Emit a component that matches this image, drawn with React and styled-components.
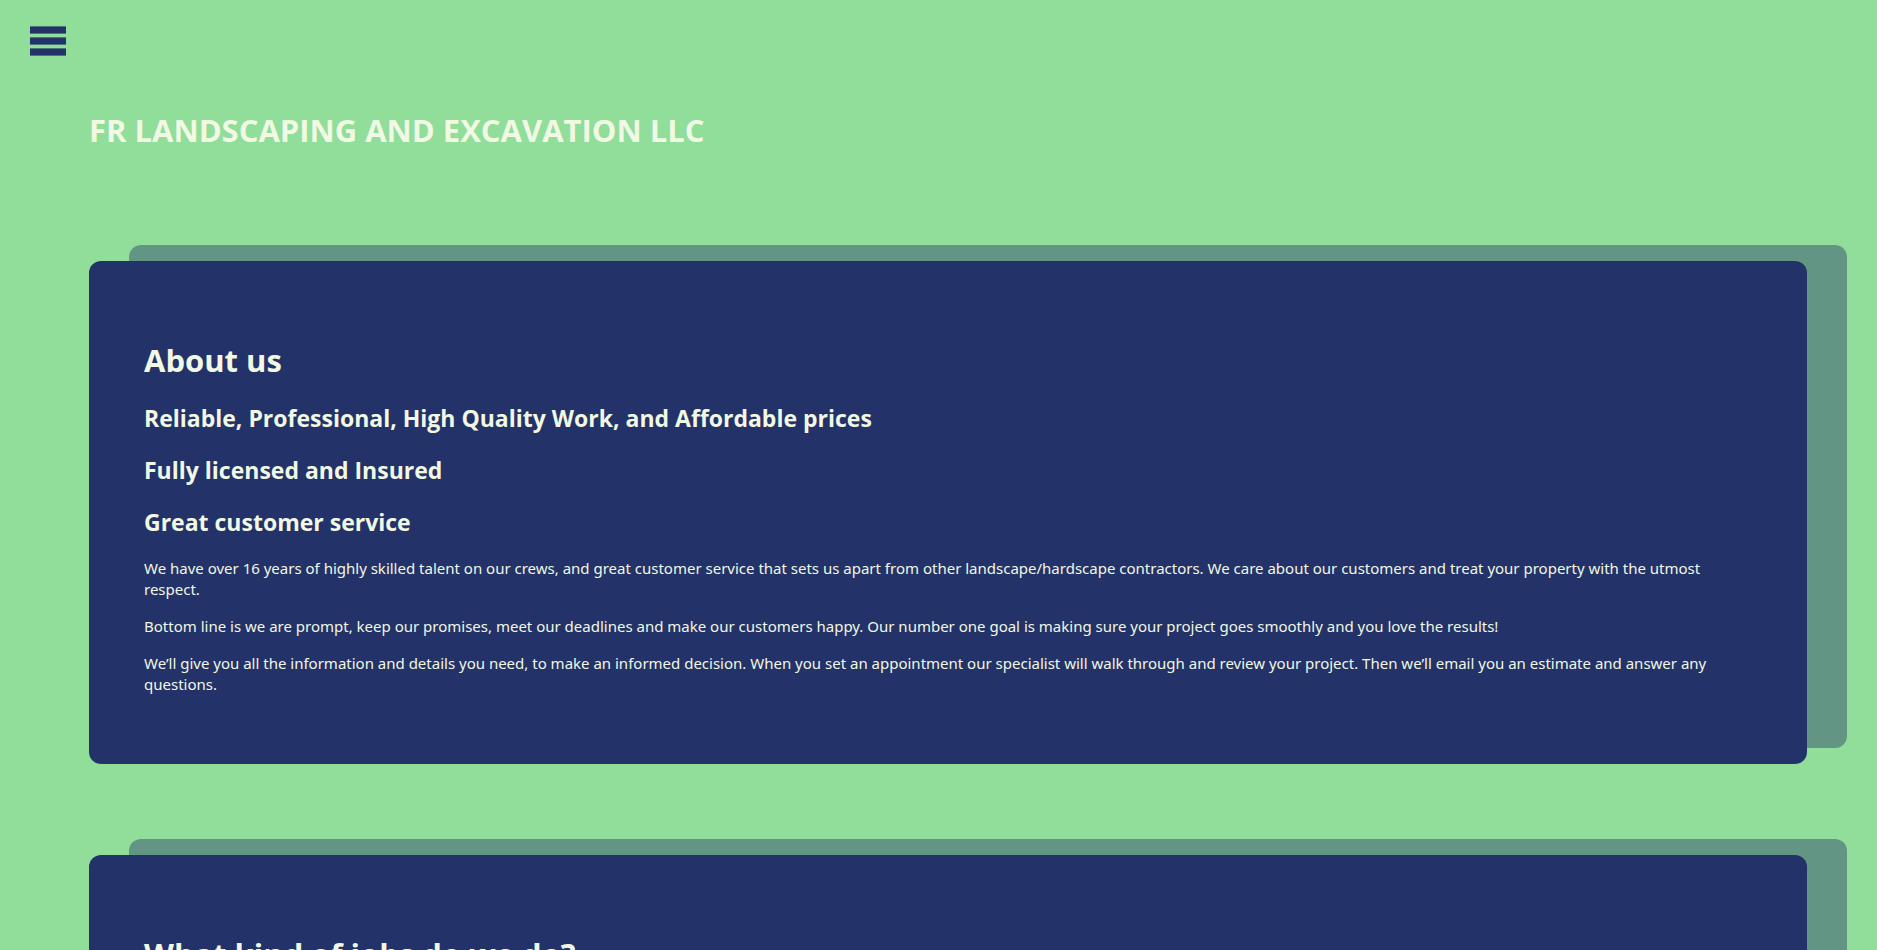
import React from 'react';
import styled, { createGlobalStyle } from 'styled-components';

const GlobalStyle = createGlobalStyle`
  *, *::before, *::after { box-sizing: border-box; }
  html { scrollbar-width: none; }
  body {
    margin: 0;
    background: #90de99;
    color: #f1f8e4;
    font-family: 'Segoe UI', 'Open Sans', 'Noto Sans', sans-serif;
    font-size: 15px;
    line-height: 21px;
  }
`;

const Header = styled.header`
  padding: 22px 30px 0;
`;

const MenuButton = styled.button`
  display: block;
  width: 36px;
  height: 38px;
  padding: 0;
  border: 0;
  background: transparent;
  color: #233268;
  cursor: pointer;

  svg { display: block; }
`;

const Main = styled.main`
  display: flex;
  flex-direction: column;
  gap: 91px;
  padding: 48px 70px 91px 89px;
`;

const Heading = styled.h1`
  margin: 0 0 20px;
  font-size: 31px;
  line-height: 44px;
  font-weight: 700;
`;

const SiteTitle = styled(Heading)`
  margin: 0 0 18px;
`;

const Card = styled.section`
  padding: 77px 56px 69px 55px;
  border-radius: 12px;
  background: #233268;
  box-shadow: 40px -16px 0 #629583;
`;

const Highlight = styled.h2`
  margin: 0 0 20px;
  font-size: 23px;
  line-height: 32px;
  font-weight: 700;
`;

const Text = styled.p`
  margin: 0 0 16px;
  font-family: 'Segoe UI', 'Noto Sans', 'Open Sans', sans-serif;

  &:last-child { margin-bottom: 0; }
`;

const highlights = [
  'Reliable, Professional, High Quality Work, and Affordable prices',
  'Fully licensed and Insured',
  'Great customer service',
];

const paragraphs = [
  'We have over 16 years of highly skilled talent on our crews, and great customer service that sets us apart from other landscape/hardscape contractors. We care about our customers and treat your property with the utmost respect.',
  'Bottom line is we are prompt, keep our promises, meet our deadlines and make our customers happy. Our number one goal is making sure your project goes smoothly and you love the results!',
  'We’ll give you all the information and details you need, to make an informed decision. When you set an appointment our specialist will walk through and review your project. Then we’ll email you an estimate and answer any questions.',
];

export default function App() {
  return (
    <>
      <GlobalStyle />
      <Header>
        <MenuButton type="button" aria-label="Open menu">
          <svg width="36" height="38" viewBox="0 0 36 38" fill="currentColor" aria-hidden="true">
            <rect y="4.4" width="36" height="7.2" />
            <rect y="15.4" width="36" height="7.2" />
            <rect y="26.4" width="36" height="7.2" />
          </svg>
        </MenuButton>
      </Header>
      <Main>
        <SiteTitle>FR LANDSCAPING AND EXCAVATION LLC</SiteTitle>
        <Card>
          <Heading>About us</Heading>
          {highlights.map((line) => (
            <Highlight key={line}>{line}</Highlight>
          ))}
          {paragraphs.map((text) => (
            <Text key={text}>{text}</Text>
          ))}
        </Card>
        <Card>
          <Heading>What kind of jobs do we do?</Heading>
        </Card>
      </Main>
    </>
  );
}
